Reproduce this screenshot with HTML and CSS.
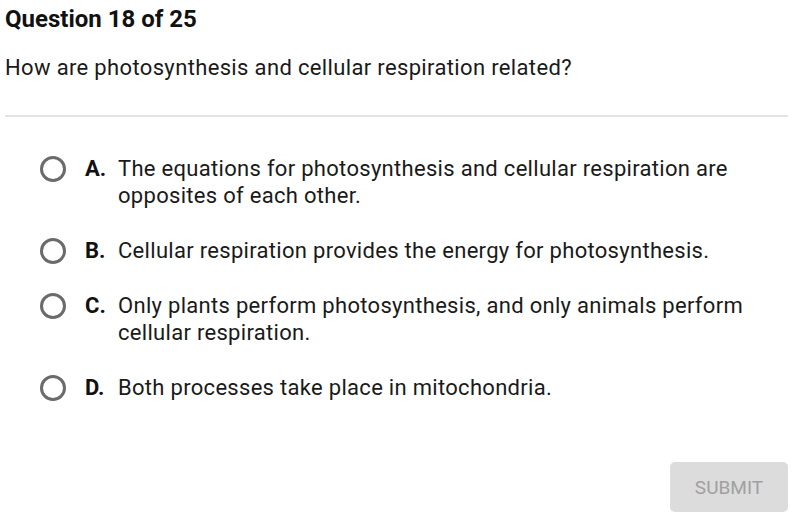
FILE: index.html
```html
<!DOCTYPE html>
<html lang="en">
<head>
    <meta charset="UTF-8">
    <title>Question 18 of 25</title>
    <link rel="stylesheet" href="styles.css">
</head>
<body>
    <div class="quiz">
        <div class="header">Question 18 of 25</div>
        <div class="question">How are photosynthesis and cellular respiration related?</div>
        <hr>
        <div class="options">
            <label class="option">
                <span class="radio"></span>
                <span class="letter">A.</span>
                <span class="text">The equations for photosynthesis and cellular respiration are opposites of each other.</span>
            </label>
            <label class="option">
                <span class="radio"></span>
                <span class="letter">B.</span>
                <span class="text">Cellular respiration provides the energy for photosynthesis.</span>
            </label>
            <label class="option">
                <span class="radio"></span>
                <span class="letter">C.</span>
                <span class="text">Only plants perform photosynthesis, and only animals perform cellular respiration.</span>
            </label>
            <label class="option">
                <span class="radio"></span>
                <span class="letter">D.</span>
                <span class="text">Both processes take place in mitochondria.</span>
            </label>
        </div>
        <div class="actions">
            <button class="submit" disabled>SUBMIT</button>
        </div>
    </div>
</body>
</html>
```

FILE: styles.css
```css
body {
    margin: 0;
    font-family: Roboto, "Liberation Sans", Arial, sans-serif;
    color: #1a1a1a;
    background: white;
}
.quiz {
    padding: 4px 4px 5px 5px;
}
.header {
    font-size: 24px;
    font-weight: bold;
    line-height: 30px;
    color: #111;
}
.question {
    font-size: 22px;
    line-height: 28px;
    letter-spacing: 0.35px;
    margin-top: 20px;
}
hr {
    border: 0;
    height: 2px;
    background: #e4e4e4;
    margin: 33px 0 0 0;
}
.options {
    display: flex;
    flex-direction: column;
    gap: 28px;
    padding: 38px 0 0 35px;
}
.option {
    display: flex;
    align-items: flex-start;
    font-size: 22px;
    line-height: 27px;
    letter-spacing: 0.3px;
    max-width: 720px;
}
.radio {
    flex: none;
    width: 26px;
    height: 26px;
    box-sizing: border-box;
    border: 3px solid #6b6b6b;
    border-radius: 50%;
    margin: 1px 19px 0 0;
}
.letter {
    flex: none;
    width: 33px;
    font-weight: bold;
    letter-spacing: 0;
    color: #111;
}
.text {
    flex: 1;
}
.actions {
    display: flex;
    justify-content: flex-end;
    margin-top: 61px;
}
.submit {
    width: 118px;
    height: 50px;
    border: none;
    border-radius: 5px;
    background: #dcdcdc;
    color: #a0a0a0;
    font-family: Roboto, "Liberation Sans", Arial, sans-serif;
    font-size: 19px;
}
```
